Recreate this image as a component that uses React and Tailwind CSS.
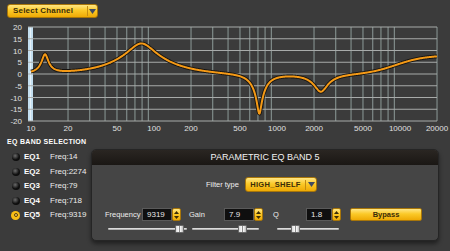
import React from 'react';

const bands = [
  { type: 'peak', f: 13, g: 8, q: 6 },
  { type: 'peak', f: 2274, g: -7.5, q: 3 },
  { type: 'peak', f: 79, g: 13, q: 1.1 },
  { type: 'peak', f: 718, g: -17, q: 6 },
  { type: 'shelf', f: 9319, g: 7.9, q: 0.707 },
];

const gainAt = (f) =>
  bands.reduce((sum, b) => {
    const x = f / b.f;
    const A = Math.pow(10, b.g / 40);
    if (b.type === 'peak') {
      const r = (1 - x * x) ** 2;
      const num = r + ((x * A) / b.q) ** 2;
      const den = r + (x / (A * b.q)) ** 2;
      return sum + 10 * Math.log10(num / den);
    }
    const k = (Math.sqrt(A) / b.q) * x;
    const num = (1 - A * x * x) ** 2 + k * k;
    const den = (A - x * x) ** 2 + k * k;
    return sum + 20 * Math.log10(A) + 10 * Math.log10(num / den);
  }, 0);

const xOf = (f) => 31 + 123 * Math.log10(f / 10);
const yOf = (db) => 74 - db * 2.35;

const curvePath = () => {
  const pts = [];
  const n = 700;
  for (let i = 0; i <= n; i++) {
    const f = 10 * Math.pow(2000, i / n);
    pts.push(`${i ? 'L' : 'M'}${xOf(f).toFixed(2)},${yOf(gainAt(f)).toFixed(2)}`);
  }
  return pts.join(' ');
};

const gridFreqs = [];
[10, 100, 1000, 10000].forEach((d) => {
  for (let m = 2; m <= 9; m++) if (m * d <= 20000) gridFreqs.push(m * d);
});

const xLabels = [10, 20, 50, 100, 200, 500, 1000, 2000, 5000, 10000, 20000];
const yLabels = [20, 15, 10, 5, 0, -5, -10, -15, -20];

const yellow =
  'bg-[linear-gradient(#ffe684,#fbc928_45%,#eeaa05)] border border-[#a8760a]';

const Arrow = () => (
  <svg width="7" height="5" viewBox="0 0 7 5">
    <polygon points="0,0 7,0 3.5,5" fill="#3f4a62" />
  </svg>
);

const Spinner = () => (
  <div className={`w-[9px] h-[13px] rounded-[2px] flex flex-col items-center justify-center gap-[2px] ${yellow}`}>
    <svg width="5" height="3" viewBox="0 0 5 3">
      <polygon points="0,3 5,3 2.5,0" fill="#3a2c08" />
    </svg>
    <svg width="5" height="3" viewBox="0 0 5 3">
      <polygon points="0,0 5,0 2.5,3" fill="#3a2c08" />
    </svg>
  </div>
);

const NumberField = ({ value, width }) => (
  <div className="flex items-center">
    <div
      className="h-[13px] bg-[#0f0f0f] border border-[#5a5a5a] text-[#e8e8e8] text-[8px] leading-[11px] pl-[4px]"
      style={{ width }}
    >
      {value}
    </div>
    <Spinner />
  </div>
);

const Slider = ({ width, thumb }) => (
  <div className="relative h-[8px] flex items-center" style={{ width }}>
    <div className="w-full h-[2px] rounded-full bg-[linear-gradient(#f0f0f0,#9a9a9a)]" />
    <div
      className="absolute top-0 w-[9px] h-[8px] rounded-[1px] bg-[linear-gradient(90deg,#d8d8d8,#fafafa_40%,#8c8c8c_50%,#fafafa_60%,#bdbdbd)] border border-[#6a6a6a]"
      style={{ left: thumb }}
    />
  </div>
);

const eqList = [
  { id: 'EQ1', freq: 14 },
  { id: 'EQ2', freq: 2274 },
  { id: 'EQ3', freq: 79 },
  { id: 'EQ4', freq: 718 },
  { id: 'EQ5', freq: 9319, active: true },
];

const App = () => {
  return (
    <div className="w-[450px] h-[251px] overflow-hidden bg-[#3b3b3b] font-['Liberation_Sans',Arial,sans-serif] text-white">
      {/* channel selector */}
      <div className="h-[20px] pt-[4px] pl-[7px]">
        <div className={`w-[91px] h-[14px] rounded-[3px] flex items-center ${yellow}`}>
          <div className="w-[79px] pl-[5px] text-[8px] font-bold text-[#3a2c08] leading-none tracking-[0.2px]">Select Channel</div>
          <div className="w-px h-[10px] bg-[#c48d10]" />
          <div className="flex-1 flex justify-center">
            <Arrow />
          </div>
        </div>
      </div>

      {/* response graph */}
      <svg width="450" height="115" viewBox="0 20 450 115" className="block">
        <rect x="28" y="27" width="5" height="94" fill="#c4dff0" />
        <line x1="30.5" y1="27" x2="30.5" y2="121" stroke="#e6f2fa" strokeWidth="1" />
        {gridFreqs.map((f) => (
          <line key={f} x1={xOf(f)} y1="27" x2={xOf(f)} y2="121" stroke="#7f8b89" strokeWidth="1.2" />
        ))}
        {yLabels.map((v) => (
          <line key={v} x1="28" y1={yOf(v)} x2="437" y2={yOf(v)} stroke="#a8abaa" strokeWidth="1.2" />
        ))}
        {yLabels.map((v) => (
          <text key={v} x="22" y={yOf(v) + 3} textAnchor="end" fontSize="8" fill="#e0e0e0" fontFamily="Liberation Sans, Arial, sans-serif">
            {v}
          </text>
        ))}
        {xLabels.map((f) => (
          <text key={f} x={xOf(f)} y="131" textAnchor="middle" fontSize="8" fill="#e0e0e0" fontFamily="Liberation Sans, Arial, sans-serif">
            {f}
          </text>
        ))}
        <path d={curvePath()} fill="none" stroke="#161412" strokeWidth="3.8" strokeLinejoin="round" />
        <path d={curvePath()} fill="none" stroke="#f59a16" strokeWidth="2" strokeLinejoin="round" />
      </svg>

      <div className="flex h-[116px]">
        {/* band selection */}
        <div className="w-[91px] pl-[7px] pt-[2px]">
          <div className="text-[7px] font-bold leading-[10px] tracking-[0.3px]">EQ BAND SELECTION</div>
          <div className="mt-[3px]">
            {eqList.map((eq) => (
              <div key={eq.id} className="h-[14.5px] flex items-center">
                <div className="w-[17px] flex justify-center">
                  {eq.active ? (
                    <div className="w-[9px] h-[9px] rounded-full bg-[#f8bd15] flex items-center justify-center">
                      <div className="w-[4px] h-[4px] rounded-full border border-[#5a3f06] bg-[#f6d36a]" />
                    </div>
                  ) : (
                    <div className="w-[8px] h-[8px] rounded-full bg-[radial-gradient(circle_at_40%_35%,#6a6a6a,#101010_55%,#050505)]" />
                  )}
                </div>
                <div className="w-[26px] text-[8px] font-bold">{eq.id}</div>
                <div className="text-[8px] text-[#ececec]">Freq:{eq.freq}</div>
              </div>
            ))}
          </div>
        </div>

        {/* parametric band panel */}
        <div className="mt-[14px] w-[348px] h-[92px] rounded-[5px] bg-[#454545] border border-[#252525] shadow-[0_3px_4px_rgba(0,0,0,0.45)] overflow-hidden">
          <div className="h-[15px] bg-[linear-gradient(#2a2622,#1a1714)] text-center text-[9px] leading-[15px] text-[#f2f2f2]">
            PARAMETRIC EQ BAND 5
          </div>

          <div className="mt-[12px] h-[15px] pl-[114px] flex items-center">
            <div className="w-[39px] text-[7.5px] text-[#eeeeee]">Filter type</div>
            <div className={`w-[72px] h-[15px] rounded-[3px] flex items-center ${yellow}`}>
              <div className="w-[59px] text-center text-[7.5px] font-bold text-[#3a2c08] tracking-[0.3px]">HIGH_SHELF</div>
              <div className="w-px h-[10px] bg-[#c48d10]" />
              <div className="flex-1 flex justify-center">
                <Arrow />
              </div>
            </div>
          </div>

          <div className="mt-[16px] h-[13px] pl-[13px] flex items-center text-[7.5px] text-[#eeeeee]">
            <div className="w-[37px]">Frequency</div>
            <NumberField value="9319" width={30} />
            <div className="w-[35px] ml-[8px]">Gain</div>
            <NumberField value="7.9" width={30} />
            <div className="w-[33px] ml-[10px]">Q</div>
            <NumberField value="1.8" width={26} />
            <div className={`ml-[9px] w-[72px] h-[13px] rounded-[2px] flex items-center justify-center text-[7.5px] font-bold text-[#3a2c08] ${yellow}`}>
              Bypass
            </div>
          </div>

          <div className="mt-[4px] h-[8px] pl-[16px] flex items-center">
            <Slider width={79} thumb={67} />
            <div className="ml-[5px]">
              <Slider width={67} thumb={46} />
            </div>
            <div className="ml-[18px]">
              <Slider width={62} thumb={14} />
            </div>
          </div>
        </div>
      </div>
    </div>
  );
};

export default App;
